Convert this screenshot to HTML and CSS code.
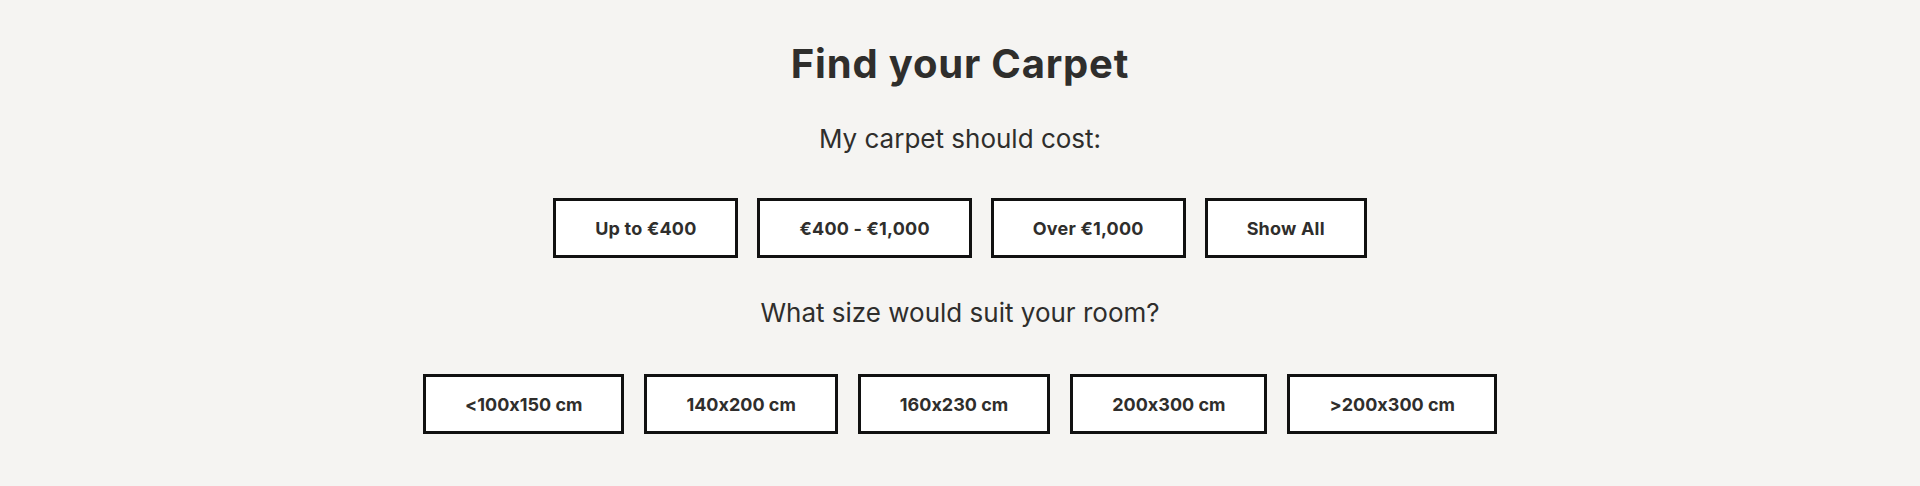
FILE: index.html
```html
<!DOCTYPE html>
<html lang="en">
<head>
<meta charset="utf-8">
<title>Find your Carpet</title>
<link rel="stylesheet" href="styles.css">
</head>
<body>
<main class="finder">
  <h1 class="finder-title">Find your Carpet</h1>
  <p class="finder-question q-price">My carpet should cost:</p>
  <div class="option-row row-price">
    <button class="option" type="button">Up to €400</button>
    <button class="option" type="button">€400 - €1,000</button>
    <button class="option" type="button">Over €1,000</button>
    <button class="option" type="button">Show All</button>
  </div>
  <p class="finder-question q-size">What size would suit your room?</p>
  <div class="option-row row-size">
    <button class="option" type="button">&lt;100x150 cm</button>
    <button class="option" type="button">140x200 cm</button>
    <button class="option" type="button">160x230 cm</button>
    <button class="option" type="button">200x300 cm</button>
    <button class="option" type="button">&gt;200x300 cm</button>
  </div>
</main>
</body>
</html>
```
FILE: styles.css
```css
html, body {
  margin: 0;
  padding: 0;
}
body {
  background: #f5f4f2;
  color: #2f2e2c;
  font-family: "Inter", "Open Sans", sans-serif;
  font-feature-settings: "calt" 0;
  height: 486px;
  overflow: hidden;
}
.finder {
  display: flex;
  flex-direction: column;
  align-items: center;
  padding-top: 42px;
}
.finder-title {
  margin: 0;
  font-size: 40px;
  line-height: 44px;
  font-weight: 700;
  letter-spacing: 0.8px;
}
.finder-question {
  margin: 0;
  font-size: 26px;
  line-height: 30px;
  font-weight: 400;
}
.q-price {
  margin-top: 38px;
}
.row-price {
  margin-top: 44px;
}
.q-size {
  margin-top: 40px;
}
.row-size {
  margin-top: 46px;
}
.option-row {
  display: flex;
  gap: 19px;
}
.row-size {
  gap: 20px;
}
.option {
  box-sizing: border-box;
  height: 60px;
  padding: 0 39px;
  background: #ffffff;
  border: 3px solid #111111;
  border-radius: 0;
  color: #2f2e2c;
  font-family: inherit;
  font-feature-settings: "calt" 0;
  font-size: 18px;
  font-weight: 700;
  letter-spacing: 0.2px;
  cursor: pointer;
}
.row-size .option {
  letter-spacing: 0;
}
```
